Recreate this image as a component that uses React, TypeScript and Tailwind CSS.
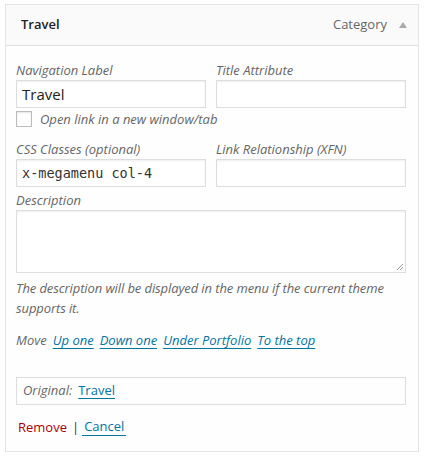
import React from "react";

const font = "font-['Open_Sans',_'Liberation_Sans',_sans-serif]";

function Label({ children }: { children: React.ReactNode }) {
  return <div className="text-[13px] leading-[20px] italic text-[#666]">{children}</div>;
}

function Input({ value, mono }: { value?: string; mono?: boolean }) {
  return (
    <div
      className={`h-[28px] border border-[#ddd] bg-white shadow-[inset_0_1px_2px_rgba(0,0,0,0.07)] px-[5px] flex items-center ${
        mono ? "font-['DejaVu_Sans_Mono',_monospace] text-[13.5px] text-[#333]" : "text-[15px] text-[#222]"
      }`}
    >
      {value}
    </div>
  );
}

function Link({ children }: { children: React.ReactNode }) {
  return <span className="text-[#0074a2] underline underline-offset-[3px] decoration-1">{children}</span>;
}

export default function App() {
  return (
    <div className={`${font} bg-white w-[424px] h-[458px] pt-[4px] pl-[5px]`}>
      <div className="w-[414px] border border-[#e5e5e5] bg-white">
        <div className="h-[41px] bg-[#fafafa] border-b border-[#dfdfdf] flex items-center pl-[15px] pr-[11px]">
          <div className="text-[13px] font-semibold text-[#222] flex-1">Travel</div>
          <div className="text-[13px] text-[#666]">Category</div>
          <svg width="8" height="6" viewBox="0 0 8 6" className="ml-[12px]">
            <path d="M4 0 L8 6 L0 6 Z" fill="#aaa" />
          </svg>
        </div>
        <div className="pl-[10px] pr-[12px] pt-[14px] pb-[14px] bg-[#fefefe]">
          <div className="grid grid-cols-2 gap-x-[10px]">
            <div>
              <Label>Navigation Label</Label>
              <Input value="Travel" />
            </div>
            <div>
              <Label>Title Attribute</Label>
              <Input />
            </div>
          </div>
          <div className="flex items-center gap-[8px] mt-[3px] h-[16px]">
            <div className="w-[16px] h-[16px] border border-[#bbb] bg-white shadow-[inset_0_1px_2px_rgba(0,0,0,0.1)]" />
            <div className="text-[13px] italic text-[#666] leading-[16px]">Open link in a new window/tab</div>
          </div>
          <div className="grid grid-cols-2 gap-x-[10px] mt-[12px]">
            <div>
              <Label>CSS Classes (optional)</Label>
              <Input value="x-megamenu col-4" mono />
            </div>
            <div>
              <Label>Link Relationship (XFN)</Label>
              <Input />
            </div>
          </div>
          <div className="mt-[3px]">
            <Label>Description</Label>
            <div className="relative h-[63px] border border-[#ddd] bg-white shadow-[inset_0_1px_2px_rgba(0,0,0,0.07)]">
              <svg width="8" height="8" viewBox="0 0 8 8" className="absolute right-[1px] bottom-[1px]">
                <path d="M7 1 L1 7 M7 4 L4 7" stroke="#999" strokeWidth="1" />
              </svg>
            </div>
          </div>
          <div className="mt-[5px] text-[13px] leading-[20px] italic text-[#666] tracking-[-0.1px]">
            The description will be displayed in the menu if the current theme supports it.
          </div>
          <div className="mt-[12px] text-[13px] leading-[20px] italic text-[#666] flex gap-[6px]">
            <span>Move</span>
            <Link>Up one</Link>
            <Link>Down one</Link>
            <Link>Under Portfolio</Link>
            <Link>To the top</Link>
          </div>
          <div className="mt-[27px] h-[28px] border border-[#ddd] flex items-center px-[6px] text-[13px] gap-[6px]">
            <span className="italic text-[#666]">Original:</span>
            <Link>Travel</Link>
          </div>
          <div className="mt-[12px] pl-[2px] text-[13px] leading-[20px] flex items-center gap-[5px]">
            <span className="text-[#a00]">Remove</span>
            <span className="text-[#333]">|</span>
            <span className="text-[#0074a2] border-b border-[#0074a2] leading-[17px] px-[2px] -ml-[2px]">Cancel</span>
          </div>
        </div>
      </div>
    </div>
  );
}
